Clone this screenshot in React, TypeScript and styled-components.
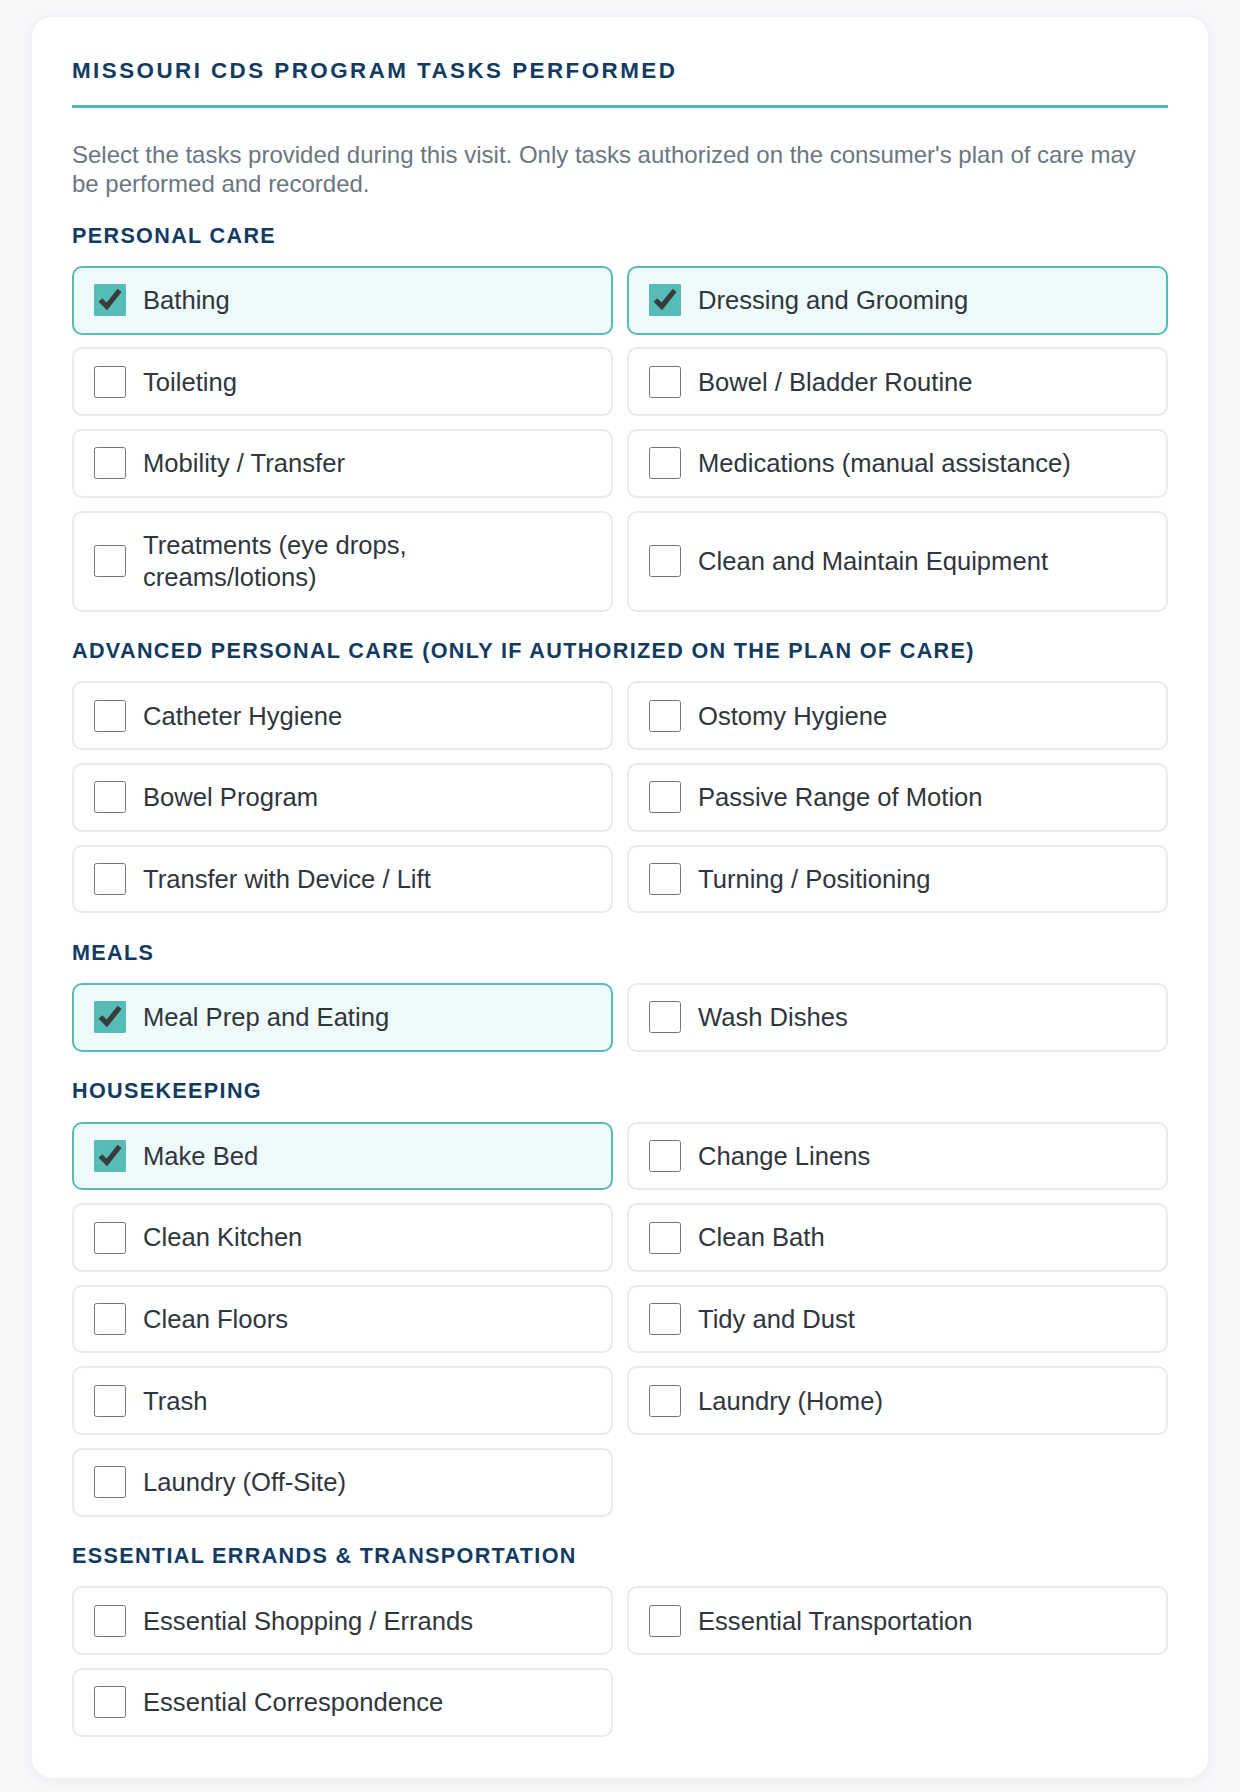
import React from 'react';
import styled, { createGlobalStyle } from 'styled-components';

const GlobalStyle = createGlobalStyle`
  * {
    box-sizing: border-box;
  }
  body {
    margin: 0;
    background: #f6f7f9;
    font-family: 'Liberation Sans', Arial, sans-serif;
  }
`;

type Task = { label: string; checked?: boolean };
type Section = { title: string; tasks: Task[] };

const sections: Section[] = [
  {
    title: 'Personal Care',
    tasks: [
      { label: 'Bathing', checked: true },
      { label: 'Dressing and Grooming', checked: true },
      { label: 'Toileting' },
      { label: 'Bowel / Bladder Routine' },
      { label: 'Mobility / Transfer' },
      { label: 'Medications (manual assistance)' },
      { label: 'Treatments (eye drops, creams/lotions)' },
      { label: 'Clean and Maintain Equipment' },
    ],
  },
  {
    title: 'Advanced Personal Care (Only if authorized on the plan of care)',
    tasks: [
      { label: 'Catheter Hygiene' },
      { label: 'Ostomy Hygiene' },
      { label: 'Bowel Program' },
      { label: 'Passive Range of Motion' },
      { label: 'Transfer with Device / Lift' },
      { label: 'Turning / Positioning' },
    ],
  },
  {
    title: 'Meals',
    tasks: [{ label: 'Meal Prep and Eating', checked: true }, { label: 'Wash Dishes' }],
  },
  {
    title: 'Housekeeping',
    tasks: [
      { label: 'Make Bed', checked: true },
      { label: 'Change Linens' },
      { label: 'Clean Kitchen' },
      { label: 'Clean Bath' },
      { label: 'Clean Floors' },
      { label: 'Tidy and Dust' },
      { label: 'Trash' },
      { label: 'Laundry (Home)' },
      { label: 'Laundry (Off-Site)' },
    ],
  },
  {
    title: 'Essential Errands & Transportation',
    tasks: [
      { label: 'Essential Shopping / Errands' },
      { label: 'Essential Transportation' },
      { label: 'Essential Correspondence' },
    ],
  },
];

export default function App() {
  return (
    <>
      <GlobalStyle />
      <Page>
        <Card>
          <Title>Missouri CDS Program Tasks Performed</Title>
          <Intro>
            Select the tasks provided during this visit. Only tasks authorized on the consumer's
            plan of care may be performed and recorded.
          </Intro>
          <Sections>
            {sections.map((section) => (
              <div key={section.title}>
                <SectionTitle>{section.title}</SectionTitle>
                <TaskGrid>
                  {section.tasks.map((task) => (
                    <TaskItem key={task.label} $checked={!!task.checked}>
                      <Checkbox type="checkbox" defaultChecked={task.checked} />
                      <TaskLabel>{task.label}</TaskLabel>
                    </TaskItem>
                  ))}
                </TaskGrid>
              </div>
            ))}
          </Sections>
        </Card>
      </Page>
    </>
  );
}

const Page = styled.div`
  padding: 17px 32px 15px;
`;

const Card = styled.div`
  background: #ffffff;
  border-radius: 20px;
  padding: 40px 40px 41px;
  box-shadow: 0 2px 12px rgba(30, 45, 70, 0.06);
`;

const Title = styled.h2`
  margin: 0;
  padding-bottom: 20px;
  border-bottom: 3px solid #52b9b1;
  font-size: 22.4px;
  line-height: 28px;
  font-weight: 700;
  letter-spacing: 2.45px;
  text-transform: uppercase;
  color: #123b63;
`;

const Intro = styled.p`
  margin: 33px 0 24px;
  font-size: 24px;
  line-height: 28.8px;
  color: #6b7683;
`;

const Sections = styled.div`
  display: flex;
  flex-direction: column;
  gap: 26.5px;
`;

const SectionTitle = styled.h3`
  margin: 0 0 17.3px;
  font-size: 21.6px;
  line-height: 26px;
  font-weight: 700;
  letter-spacing: 1.33px;
  text-transform: uppercase;
  color: #123b63;
`;

const TaskGrid = styled.div`
  display: grid;
  grid-template-columns: 1fr 1fr;
  gap: 12.9px 14px;
`;

const TaskItem = styled.label<{ $checked: boolean }>`
  display: flex;
  align-items: center;
  gap: 14px;
  padding: 16.25px 30px 16.25px 16px;
  border: 2px solid ${(p) => (p.$checked ? '#56bcb4' : '#e7eaee')};
  border-radius: 10px;
  background: ${(p) => (p.$checked ? '#effafa' : '#ffffff')};
  cursor: pointer;
`;

const Checkbox = styled.input`
  flex: none;
  width: 32px;
  height: 32px;
  margin: 0 3px 0 4px;
  accent-color: #56bdb6;
`;

const TaskLabel = styled.span`
  font-size: 25.6px;
  line-height: 32.2px;
  color: #30363d;
`;
